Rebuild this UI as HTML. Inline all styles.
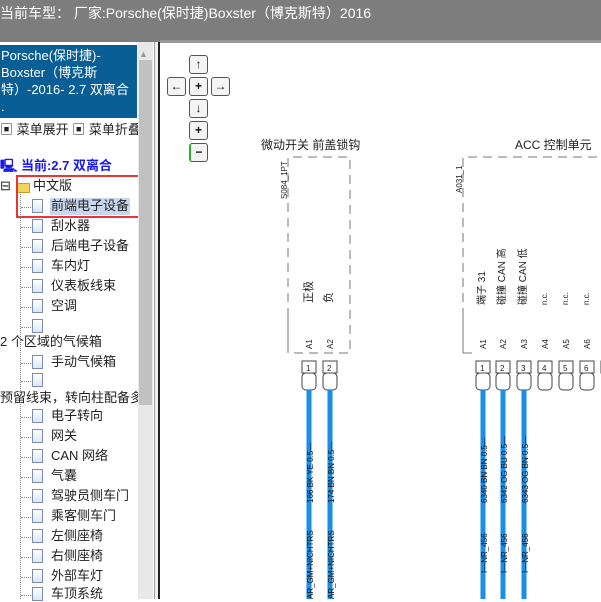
<!DOCTYPE html>
<html><head><meta charset="utf-8"><style>
*{margin:0;padding:0;box-sizing:border-box}
body{width:601px;height:599px;overflow:hidden;background:#fff;position:relative;font-family:"Liberation Sans","Noto Sans CJK SC",sans-serif}
#top{position:absolute;left:0;top:0;width:601px;height:42px;background:#7d7d7d;color:#fff;font-size:14px;padding:3px 0 0 0}
#left{position:absolute;left:0;top:42px;width:155px;height:557px;background:#fff;overflow:hidden}
#sb{position:absolute;left:138px;top:42px;width:15px;height:557px;background:#e8e8e8}
#thumb{position:absolute;left:139px;top:60px;width:13px;height:345px;background:#c1c1c1}
#div{position:absolute;left:154px;top:42px;width:6px;height:557px;background:#f0f0f0;border-left:1px solid #999;border-right:2px solid #222}
#blue{position:absolute;left:0;top:45px;width:137px;height:73px;background:#0a5e96;color:#fff;font-size:13px;line-height:17px;padding:2px 0 0 1px}
.t{position:absolute;font-size:13px;color:#222;white-space:nowrap;line-height:16px}
.doc{position:absolute;width:11px;height:14px;border:1px solid #7a8cb8;background:linear-gradient(#fff,#dde6f6)}
.dot{position:absolute;border-top:1px dotted #888;width:10px}
.btn{position:absolute;width:19px;height:19px;border:1px solid #555;border-radius:3px;background:#f4f4f4;font-size:12px;text-align:center;line-height:17px;color:#111;font-weight:bold}
</style></head><body>
<div id="top">当前车型：&nbsp;厂家:Porsche(保时捷)Boxster（博克斯特）2016</div>
<div id="left"></div>
<div id="blue">Porsche(保时捷)-<br>Boxster（博克斯<br>特）-2016- 2.7 双离合<br>.</div>
<div class="t" style="left:0;top:122px">▣ 菜单展开 ▣ 菜单折叠</div>
<div class="t" style="left:0;top:158px;color:#1a1aee;font-weight:bold">🖳 当前:2.7 双离合</div>
<div class="t" style="left:0;top:178px">⊟</div>
<div style="position:absolute;left:17px;top:183px;width:13px;height:10px;background:#f3d35a;border:1px solid #c9a020"></div>
<div class="t" style="left:33px;top:178px">中文版</div>
<div style="position:absolute;left:16px;top:175px;width:128px;height:43px;border:2px solid #e33"></div>
<div style="position:absolute;left:50px;top:198px;width:80px;height:17px;background:#c9d7ee"></div>
<div id="items"></div>
<div id="sb"></div><div id="thumb"></div>
<div class="t" style="left:139px;top:46px;font-size:9px;color:#999">▲</div>
<div id="div"></div>
<div style="position:absolute;left:160px;top:40px;width:441px;height:3px;background:#999"></div>
<div class="btn" style="left:189px;top:55px">↑</div>
<div class="btn" style="left:167px;top:77px">←</div>
<div class="btn" style="left:189px;top:77px">+</div>
<div class="btn" style="left:211px;top:77px">→</div>
<div class="btn" style="left:189px;top:99px">↓</div>
<div class="btn" style="left:189px;top:121px">+</div>
<div class="btn" style="left:189px;top:143px;border-left:2px solid #3a3">−</div>
<svg style="position:absolute;left:160px;top:43px" width="441" height="556" font-family="Liberation Sans,Noto Sans CJK SC,sans-serif">
<g fill="#222" font-size="12">
<text x="101" y="106">微动开关 前盖锁钩</text>
<text x="355" y="106">ACC 控制单元</text>
</g>
<g stroke="#777" fill="none" stroke-dasharray="9,6">
<path d="M128 274V114H190V310H128"/>
<path d="M303 274V114H441"/>
</g>
<path d="M128 274V310M303 274V310M303 310H312" stroke="#777"/>
<g font-size="8" fill="#222">
<text transform="translate(127,156) rotate(-90)">S084_1PT</text>
<text transform="translate(302,150) rotate(-90)">A031_1</text>
<text transform="translate(152,260) rotate(-90)" font-size="11">正极</text>
<text transform="translate(172,260) rotate(-90)" font-size="11">负</text>
<text transform="translate(325,262) rotate(-90)" font-size="10">端子 31</text>
<text transform="translate(345,262) rotate(-90)" font-size="10">碰撞 CAN 高</text>
<text transform="translate(366,262) rotate(-90)" font-size="10">碰撞 CAN 低</text>
<text transform="translate(387,262) rotate(-90)">n.c.</text>
<text transform="translate(408,262) rotate(-90)">n.c.</text>
<text transform="translate(429,262) rotate(-90)">n.c.</text>
</g>
<g font-size="8" fill="#222" stroke="#444" stroke-width="1">
<g fill="none">
<rect x="142" y="318" width="14" height="12"/><rect x="142" y="330" width="14" height="17" rx="4" fill="#fff"/>
<rect x="163" y="318" width="14" height="12"/><rect x="163" y="330" width="14" height="17" rx="4" fill="#fff"/>
<rect x="316" y="318" width="14" height="12"/><rect x="316" y="330" width="14" height="17" rx="4" fill="#fff"/>
<rect x="336" y="318" width="14" height="12"/><rect x="336" y="330" width="14" height="17" rx="4" fill="#fff"/>
<rect x="357" y="318" width="14" height="12"/><rect x="357" y="330" width="14" height="17" rx="4" fill="#fff"/>
<rect x="378" y="318" width="14" height="12"/><rect x="378" y="330" width="14" height="17" rx="4" fill="#fff"/>
<rect x="399" y="318" width="14" height="12"/><rect x="399" y="330" width="14" height="17" rx="4" fill="#fff"/>
<rect x="420" y="318" width="14" height="12"/><rect x="420" y="330" width="14" height="17" rx="4" fill="#fff"/>
<rect x="441" y="318" width="14" height="12"/>
</g>
<g stroke="none">
<text x="146" y="328">1</text><text x="167" y="328">2</text>
<text x="320" y="328">1</text><text x="340" y="328">2</text><text x="361" y="328">3</text><text x="382" y="328">4</text><text x="403" y="328">5</text><text x="424" y="328">6</text>
<text transform="translate(152,306) rotate(-90)">A1</text>
<text transform="translate(173,306) rotate(-90)">A2</text>
<text transform="translate(326,306) rotate(-90)">A1</text>
<text transform="translate(346,306) rotate(-90)">A2</text>
<text transform="translate(367,306) rotate(-90)">A3</text>
<text transform="translate(388,306) rotate(-90)">A4</text>
<text transform="translate(409,306) rotate(-90)">A5</text>
<text transform="translate(430,306) rotate(-90)">A6</text>
</g>
</g>
<g stroke="#1a8fe8" stroke-width="5">
<path d="M149 347V556M170 347V556M323 347V556M343 347V556M364 347V556"/>
</g>
<g font-size="8" fill="#111">
<text transform="translate(153,460) rotate(-90)">166  BK YE 0.5—</text>
<text transform="translate(174,460) rotate(-90)">174  BN BN 0.5—</text>
<text transform="translate(327,460) rotate(-90)">6340  BN BN 0.5—</text>
<text transform="translate(347,460) rotate(-90)">6342  OG BU 0.5—</text>
<text transform="translate(368,460) rotate(-90)">6343  OG BN 0.5—</text>
<text transform="translate(153,556) rotate(-90)">AR_GM+NICHTRS</text>
<text transform="translate(174,556) rotate(-90)">AR_GM+NICHTRS</text>
<text transform="translate(327,530) rotate(-90)">I—NR_456</text>
<text transform="translate(347,530) rotate(-90)">I—NR_456</text>
<text transform="translate(368,530) rotate(-90)">I—NR_456</text>
</g>
</svg>
<script>
var it=[[198,'前端电子设备',1],[218,'刮水器',1],[238,'后端电子设备',1],[258,'车内灯',1],[278,'仪表板线束',1],[298,'空调',1],[318,'',1],[334,'2 个区域的气候箱',0],[354,'手动气候箱',1],[372,'',1],[390,'预留线束，转向柱配备多',0],[408,'电子转向',1],[428,'网关',1],[448,'CAN 网络',1],[468,'气囊',1],[488,'驾驶员侧车门',1],[508,'乘客侧车门',1],[528,'左侧座椅',1],[548,'右侧座椅',1],[568,'外部车灯',1],[586,'车顶系统',1]];
var h='';
it.forEach(function(r){if(r[2]){h+='<div class="dot" style="left:21px;top:'+(r[0]+9)+'px"></div><div class="doc" style="left:32px;top:'+(r[0]+1)+'px"></div><div class="t" style="left:51px;top:'+r[0]+'px">'+r[1]+'</div>';}else{h+='<div class="t" style="left:0;top:'+r[0]+'px">'+r[1]+'</div>';}});
h+='<div style="position:absolute;left:20px;top:192px;height:407px;border-left:1px dotted #888"></div>';
document.getElementById('items').outerHTML=h;
</script>
</body></html>
